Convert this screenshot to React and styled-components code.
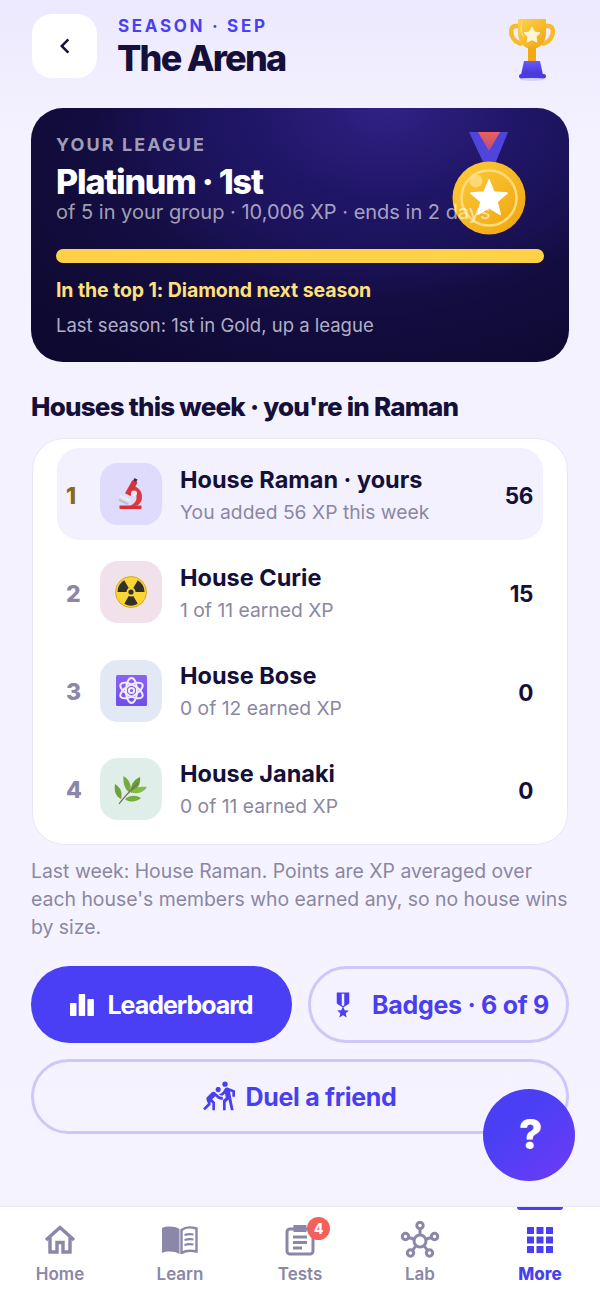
import styled, { createGlobalStyle } from "styled-components";
import { MdMilitaryTech, MdSportsKabaddi, MdChevronLeft } from "react-icons/md";

const GlobalStyle = createGlobalStyle`
  html, body { margin: 0; padding: 0; }
  body { font-family: "Inter", "Liberation Sans", sans-serif; background: #f5f3ff; }
  * { box-sizing: border-box; }
`;

const Page = styled.div`
  width: 600px;
  height: 1298px;
  display: flex;
  flex-direction: column;
  position: relative;
  overflow: hidden;
  background: linear-gradient(180deg, #ece9fe 0, #f4f2ff 140px, #f5f3ff 100%);
`;

const Main = styled.main`
  flex: 1;
  padding: 14px 31px 0;
`;

const Header = styled.header`
  display: flex;
  align-items: center;
  height: 64px;
`;

const BackButton = styled.button`
  width: 65px;
  height: 64px;
  margin-left: 1px;
  border: 0;
  border-radius: 20px;
  background: #fff;
  color: #15103a;
  display: flex;
  align-items: center;
  justify-content: center;
  padding: 0;
  font-size: 30px;
`;

const TitleBlock = styled.div`
  margin-left: 20px;
  flex: 1;
`;

const Eyebrow = styled.div`
  font-size: 17px;
  line-height: 20px;
  margin: 2px 0 0 1px;
  font-weight: 700;
  letter-spacing: 2.7px;
  color: #4b3ff0;
`;

const Title = styled.h1`
  margin: 2px 0 0;
  font-size: 36px;
  line-height: 40px;
  font-weight: 800;
  letter-spacing: -1.75px;
  color: #15103a;
`;

const TrophyWrap = styled.div`
  width: 46px;
  height: 62px;
  margin-right: 14px;
  margin-top: 8px;
`;

const LeagueCard = styled.section`
  position: relative;
  margin-top: 30px;
  height: 254px;
  border-radius: 32px;
  padding: 26px 25px 0;
  overflow: hidden;
  background: radial-gradient(ellipse 290px 190px at 66% 0, #2f2184 0, #1f1565 50%, transparent 100%),
    radial-gradient(ellipse 420px 250px at 60% 20%, #1d1460 0, #120c3c 70%, #0e0930 100%);
`;

const LeagueLabel = styled.div`
  position: relative;
  z-index: 1;
  font-size: 18px;
  line-height: 22px;
  font-weight: 700;
  letter-spacing: 2.1px;
  color: #a09db8;
`;

const LeagueTitle = styled.div`
  position: relative;
  z-index: 1;
  margin: 6px 0 -1px;
  font-size: 34px;
  line-height: 40px;
  font-weight: 800;
  letter-spacing: -1.2px;
  color: #fff;
`;

const LeagueSub = styled.div`
  position: relative;
  z-index: 1;
  font-size: 20px;
  line-height: 23px;
  color: rgba(255, 255, 255, 0.62);
  white-space: nowrap;
`;

const MedalWrap = styled.div`
  position: absolute;
  top: 23px;
  right: 43px;
  width: 74px;
  height: 104px;
`;

const ProgressTrack = styled.div`
  margin-top: 25px;
  height: 14px;
  border-radius: 7px;
  background: #ffd148;
`;

const NextLine = styled.div`
  margin-top: 15px;
  font-size: 19.5px;
  line-height: 24px;
  font-weight: 700;
  letter-spacing: -0.1px;
  color: #ffe07d;
`;

const LastLine = styled.div`
  margin-top: 11px;
  font-size: 18.5px;
  line-height: 24px;
  color: #b1aec6;
`;

const SectionTitle = styled.h2`
  margin: 27px 0 0;
  font-size: 26px;
  line-height: 36px;
  font-weight: 800;
  letter-spacing: -0.78px;
  color: #15103a;
`;

const HouseCard = styled.section`
  margin: 13px 1px 0;
  height: 407px;
  padding: 9px 24px;
  border-radius: 32px;
  background: #fff;
  border: 1px solid #e9e6f8;
`;

const HouseRow = styled.div`
  height: 92px;
  margin-bottom: 6.3px;
  display: flex;
  align-items: center;
  border-radius: 22px;
  padding: 0 10px 0 9px;
  background: ${(p) => (p.$mine ? "#f3f1fe" : "transparent")};
`;

const Rank = styled.div`
  width: 34px;
  padding-top: 3px;
  font-size: 23px;
  font-weight: 800;
  color: ${(p) => (p.$mine ? "#8a6a14" : "#8a87a8")};
`;

const IconTile = styled.div`
  width: 62px;
  height: 62px;
  border-radius: 18px;
  display: flex;
  align-items: center;
  justify-content: center;
  background: ${(p) => p.$bg};
`;

const HouseText = styled.div`
  margin-left: 18px;
  padding-top: 1px;
  flex: 1;
`;

const HouseName = styled.div`
  font-size: 23.5px;
  line-height: 30px;
  font-weight: 700;
  color: #15103a;
`;

const HouseSub = styled.div`
  font-size: 19.3px;
  line-height: 26px;
  margin-top: 4px;
  color: #8a87a3;
`;

const Points = styled.div`
  padding-top: 3px;
  font-size: 22.5px;
  font-weight: 700;
  letter-spacing: -0.4px;
  color: #15103a;
`;

const Note = styled.p`
  margin: 12px 0 0;
  font-size: 19.4px;
  line-height: 28px;
  color: #8a87a3;
`;

const ButtonRow = styled.div`
  display: grid;
  grid-template-columns: 1fr 1fr;
  gap: 16px;
  margin-top: 25px;
`;

const ActionButton = styled.button`
  width: 100%;
  height: ${(p) => p.$h || 77}px;
  border-radius: 40px;
  display: flex;
  align-items: center;
  justify-content: center;
  gap: ${(p) => p.$gap || 10}px;
  padding: 0;
  font-family: inherit;
  font-size: 25px;
  font-weight: 700;
  letter-spacing: ${(p) => (p.$solid ? "-1px" : "-0.3px")};
  border: ${(p) => (p.$solid ? "0" : "3px solid #cdc8f8")};
  background: ${(p) => (p.$solid ? "#4a3ff5" : "transparent")};
  color: ${(p) => (p.$solid ? "#fff" : "#4a3ff0")};
`;

const WideRow = styled.div`
  margin-top: 16px;
`;

const Fab = styled.button`
  position: absolute;
  left: 483px;
  top: 1089px;
  width: 92px;
  height: 92px;
  border: 0;
  border-radius: 50%;
  padding: 0 0 2px 3px;
  background: linear-gradient(140deg, #4a3ff5 35%, #6f3bf5 100%);
  color: #fff;
  font-family: inherit;
  font-size: 41px;
  font-weight: 800;
`;

const TabBar = styled.nav`
  height: 92px;
  display: flex;
  background: #fff;
  border-top: 1px solid #e9e6f8;
`;

const Tab = styled.div`
  position: relative;
  flex: 1;
  display: flex;
  flex-direction: column;
  align-items: center;
  padding-top: 15px;
  color: ${(p) => (p.$active ? "#4a3ff0" : "#8a87a8")};
`;

const TabIcon = styled.div`
  position: relative;
  width: 40px;
  height: 36px;
  display: flex;
  align-items: center;
  justify-content: center;
`;

const TabLabel = styled.div`
  margin-top: 6px;
  font-size: 17px;
  line-height: 20px;
  font-weight: ${(p) => (p.$active ? 800 : 600)};
`;

const TabMarker = styled.div`
  position: absolute;
  top: 0;
  left: 37px;
  width: 46px;
  height: 3px;
  border-radius: 0 0 4px 4px;
  background: #4a3ff0;
`;

const CountBadge = styled.div`
  position: absolute;
  top: -5px;
  right: -10px;
  width: 23px;
  height: 23px;
  border-radius: 50%;
  background: #f4605a;
  color: #fff;
  font-size: 14px;
  font-weight: 800;
  display: flex;
  align-items: center;
  justify-content: center;
`;

const Trophy = () => (
  <svg width="46" height="62" viewBox="0 0 46 62">
    <defs>
      <linearGradient id="tg" x1="0" y1="0" x2="1" y2="1">
        <stop offset="0" stopColor="#ffd34d" />
        <stop offset="1" stopColor="#f0a50e" />
      </linearGradient>
      <linearGradient id="tb" x1="0" y1="0" x2="0" y2="1">
        <stop offset="0" stopColor="#6a5cf6" />
        <stop offset="1" stopColor="#4534d8" />
      </linearGradient>
    </defs>
    <path d="M10 7H7C1.500 7 1.500 13 3 17c2 5 6 7 10 8" fill="none" stroke="#f6bb2c" strokeWidth="4.500" />
    <path d="M36 7h3c5.500 0 5.500 6 4 10-2 5-6 7-10 8" fill="none" stroke="#f6bb2c" strokeWidth="4.500" />
    <path d="M9 0h28v14c0 9-6 16-14 16S9 23 9 14z" fill="url(#tg)" />
    <path d="M13 3c-2 6-1 11 2 15" fill="none" stroke="#fff2c4" strokeWidth="0.900" opacity="0.8" />
    <rect x="19" y="28" width="8" height="15" fill="#f2aa14" />
    <path d="M23 8l2.500 5 5.500.8-4 3.900.9 5.500-4.900-2.600-4.900 2.600.9-5.500-4-3.900 5.500-.8z" fill="#fff6d8" stroke="#fff6d8" strokeLinejoin="round" />
    <path d="M15 42h16l3 14H12z" fill="url(#tb)" />
    <rect x="10" y="55" width="27" height="4.500" rx="2.200" fill="#4a3ae0" />
    <ellipse cx="23" cy="60.500" rx="12" ry="1.400" fill="#d6d1f8" />
  </svg>
);

const Medal = () => (
  <svg width="74" height="104" viewBox="0 0 74 104">
    <defs>
      <linearGradient id="mg" x1="0" y1="0" x2="1" y2="1">
        <stop offset="0" stopColor="#ffcc3c" />
        <stop offset="1" stopColor="#eea40c" />
      </linearGradient>
      <linearGradient id="mr" x1="0" y1="0" x2="0" y2="1">
        <stop offset="0" stopColor="#f0605a" />
        <stop offset="1" stopColor="#b04d80" />
      </linearGradient>
    </defs>
    <path d="M17 1h39L43 33H32z" fill="#4f45dd" />
    <path d="M26 1h22L37 20z" fill="url(#mr)" />
    <circle cx="37" cy="67" r="36.500" fill="url(#mg)" />
    <circle cx="37" cy="67" r="27.500" fill="none" stroke="#ffdc7e" strokeWidth="2.500" />
    <circle cx="24" cy="50" r="6.500" fill="#ffe08a" opacity="0.75" />
    <path d="M37 49L42 61.100L55.100 62.100L45.100 70.600L48.200 83.400L37 76.500L25.800 83.400L28.900 70.600L18.900 62.100L32 61.100z" fill="#fff" stroke="#fff" strokeWidth="1.500" strokeLinejoin="round" />
  </svg>
);

const Microscope = () => (
  <svg width="25" height="32" viewBox="0 0 25 32">
    <rect x="0.500" y="27.500" width="22" height="3.500" rx="0.800" fill="#d5303a" />
    <path d="M14 8c6 1 9.500 6 9 12-.4 4-3 7-6 8h-6c4-2 7-5 6.500-9-.3-3-2-5-5-6z" fill="#d93a42" />
    <path d="M13.500 2l5 2.600-7 13.400-5.500-2.800z" fill="#d5343c" />
    <path d="M15.500 0l3 1.600-1.300 2.600-3-1.600z" fill="#3b3640" />
    <path d="M1 16.500l10.500 5-1 2.200L0 18.800z" fill="#e9edf3" />
    <path d="M0 20.500l9.500 4.500-1 2L0 23z" fill="#b9c2d0" />
    <circle cx="15" cy="15.500" r="3" fill="#e8ebf1" />
  </svg>
);

const Radiation = () => (
  <svg width="32" height="32" viewBox="0 0 32 32">
    <circle cx="16" cy="16" r="15.500" fill="#fbd534" stroke="#c9a012" strokeWidth="0.800" />
    <path d="M16 16L2.500 16A13.500 13.500 0 0 1 9.250 4.300z" fill="#33302a" />
    <path d="M16 16L2.500 16A13.500 13.500 0 0 1 9.250 4.300z" fill="#33302a" transform="rotate(120 16 16)" />
    <path d="M16 16L2.500 16A13.500 13.500 0 0 1 9.250 4.300z" fill="#33302a" transform="rotate(240 16 16)" />
    <circle cx="16" cy="16" r="4.500" fill="#fbd534" />
    <circle cx="16" cy="16" r="2.600" fill="#33302a" />
  </svg>
);

const AtomTile = () => (
  <svg width="31" height="31" viewBox="0 0 31 31">
    <defs>
      <linearGradient id="at" x1="0" y1="0" x2="0" y2="1">
        <stop offset="0" stopColor="#8a63f2" />
        <stop offset="1" stopColor="#6e4fe8" />
      </linearGradient>
    </defs>
    <rect width="31" height="31" rx="1.500" fill="url(#at)" />
    <g fill="none" stroke="#f1ecff" strokeWidth="2">
      <ellipse cx="15.500" cy="15.500" rx="12.500" ry="5.500" transform="rotate(30 15.500 15.500)" />
      <ellipse cx="15.500" cy="15.500" rx="12.500" ry="5.500" transform="rotate(90 15.500 15.500)" />
      <ellipse cx="15.500" cy="15.500" rx="12.500" ry="5.500" transform="rotate(150 15.500 15.500)" />
      <circle cx="15.500" cy="15.500" r="2.600" />
    </g>
  </svg>
);

const Leaf = () => (
  <svg width="34" height="32" viewBox="0 0 34 32">
    <path d="M16 20C10 16 9 9 9.500 3c5 3 9 9 6.500 17z" fill="#74ab3a" />
    <path d="M17 20C16 13 19 7 26 4c1 6-2 13-9 16z" fill="#6a9f35" />
    <path d="M7 26C1 23 0 17 1 11c5 3 8 8 6 15z" fill="#6fa336" />
    <path d="M17 19c4-5 10-6 16-5-3 5-10 8-16 5z" fill="#84bb46" />
    <path d="M11 26c5-4 11-4 16-1-4 4-12 5-16 1z" fill="#76ad3c" />
    <path d="M5 31C10 24 16 18 24 10" stroke="#7d6c58" strokeWidth="1.200" fill="none" />
  </svg>
);

const BarsIcon = () => (
  <svg width="24" height="22" viewBox="0 0 24 22" fill="currentColor">
    <rect x="0" y="9" width="6.500" height="13" rx="0.800" />
    <rect x="8.700" y="0" width="6.500" height="22" rx="0.800" />
    <rect x="17.400" y="5" width="6.500" height="17" rx="0.800" />
  </svg>
);

const HomeIcon = () => (
  <svg width="32" height="30" viewBox="0 0 32 30" fill="none" stroke="currentColor" strokeWidth="3.400">
    <path d="M2 15L16 2.500 30 15" strokeLinejoin="miter" />
    <path d="M6 12.500V27h7v-9.500h6V27h7V12.500" />
  </svg>
);

const BookIcon = () => (
  <svg width="36" height="28" viewBox="0 0 36 28">
    <path d="M0 2c5-2 12-2 17.500 1v25C12 25 5 25 0 27z" fill="currentColor" />
    <path d="M19.500 4c4-3 10-3 15-1.500v23c-5-1-11-1-15 1.500z" fill="none" stroke="currentColor" strokeWidth="2.400" />
    <path d="M22.500 9c3-1 6-1 9-.5M22.500 14c3-1 6-1 9-.5M22.500 19c3-1 6-1 9-.5" fill="none" stroke="currentColor" strokeWidth="2.200" />
  </svg>
);

const TestsIcon = () => (
  <svg width="30" height="32" viewBox="0 0 30 32" fill="none" stroke="currentColor" strokeWidth="3">
    <rect x="2" y="5" width="26" height="25" rx="3" />
    <path d="M10 2.500h10v4H10z" fill="currentColor" />
    <path d="M8 13h14M8 18.500h14M8 24h9" />
  </svg>
);

const LabIcon = () => (
  <svg width="38" height="38" viewBox="0 0 38 38" fill="none" stroke="currentColor" strokeWidth="3">
    <circle cx="19" cy="20" r="6" />
    <circle cx="19" cy="4.500" r="3.200" />
    <circle cx="4.500" cy="15.500" r="3.200" />
    <circle cx="33.500" cy="15.500" r="3.200" />
    <circle cx="9.500" cy="32" r="3.200" />
    <circle cx="28.500" cy="32" r="3.200" />
    <path d="M19 8v6M7.500 16.500l6 1.800M30.500 16.500l-6 1.800M11.500 29.500l3.500-5M26.500 29.500l-3.500-5" />
  </svg>
);

const GridIcon = () => (
  <svg width="26" height="26" viewBox="0 0 26 26" fill="currentColor">
    {[0, 9.5, 19].map((y) =>
      [0, 9.5, 19].map((x) => <rect key={`${x}-${y}`} x={x} y={y} width="7" height="7" rx="0.500" />)
    )}
  </svg>
);

const houses = [
  { rank: 1, name: "House Raman · yours", sub: "You added 56 XP this week", pts: 56, bg: "#dedbfd", icon: <Microscope />, mine: true },
  { rank: 2, name: "House Curie", sub: "1 of 11 earned XP", pts: 15, bg: "#f1e1ea", icon: <Radiation /> },
  { rank: 3, name: "House Bose", sub: "0 of 12 earned XP", pts: 0, bg: "#e2e9f5", icon: <AtomTile /> },
  { rank: 4, name: "House Janaki", sub: "0 of 11 earned XP", pts: 0, bg: "#e0eee9", icon: <Leaf /> },
];

const tabs = [
  { label: "Home", icon: <HomeIcon /> },
  { label: "Learn", icon: <BookIcon /> },
  { label: "Tests", icon: <TestsIcon />, count: 4 },
  { label: "Lab", icon: <LabIcon /> },
  { label: "More", icon: <GridIcon />, active: true },
];

const App = () => {
  return (
    <Page>
      <GlobalStyle />
      <Main>
        <Header>
          <BackButton aria-label="Back">
            <MdChevronLeft />
          </BackButton>
          <TitleBlock>
            <Eyebrow>SEASON · SEP</Eyebrow>
            <Title>The Arena</Title>
          </TitleBlock>
          <TrophyWrap>
            <Trophy />
          </TrophyWrap>
        </Header>

        <LeagueCard>
          <MedalWrap>
            <Medal />
          </MedalWrap>
          <LeagueLabel>YOUR LEAGUE</LeagueLabel>
          <LeagueTitle>Platinum · 1st</LeagueTitle>
          <LeagueSub>of 5 in your group · 10,006 XP · ends in 2 days</LeagueSub>
          <ProgressTrack />
          <NextLine>In the top 1: Diamond next season</NextLine>
          <LastLine>Last season: 1st in Gold, up a league</LastLine>
        </LeagueCard>

        <SectionTitle>Houses this week · you're in Raman</SectionTitle>

        <HouseCard>
          {houses.map((h) => (
            <HouseRow key={h.rank} $mine={h.mine}>
              <Rank $mine={h.mine}>{h.rank}</Rank>
              <IconTile $bg={h.bg}>{h.icon}</IconTile>
              <HouseText>
                <HouseName>{h.name}</HouseName>
                <HouseSub>{h.sub}</HouseSub>
              </HouseText>
              <Points>{h.pts}</Points>
            </HouseRow>
          ))}
        </HouseCard>

        <Note>
          Last week: House Raman. Points are XP averaged over each house's members who earned any, so no house wins by size.
        </Note>

        <ButtonRow>
          <ActionButton $solid $gap={13}>
            <BarsIcon />
            Leaderboard
          </ActionButton>
          <ActionButton $gap={14}>
            <MdMilitaryTech size={30} />
            Badges · 6 of 9
          </ActionButton>
        </ButtonRow>
        <WideRow>
          <ActionButton $h={75}>
            <MdSportsKabaddi size={32} />
            Duel a friend
          </ActionButton>
        </WideRow>
      </Main>

      <Fab aria-label="Help">?</Fab>

      <TabBar>
        {tabs.map((t) => (
          <Tab key={t.label} $active={t.active}>
            {t.active && <TabMarker />}
            <TabIcon>
              {t.icon}
              {t.count && <CountBadge>{t.count}</CountBadge>}
            </TabIcon>
            <TabLabel $active={t.active}>{t.label}</TabLabel>
          </Tab>
        ))}
      </TabBar>
    </Page>
  );
};

export default App;
